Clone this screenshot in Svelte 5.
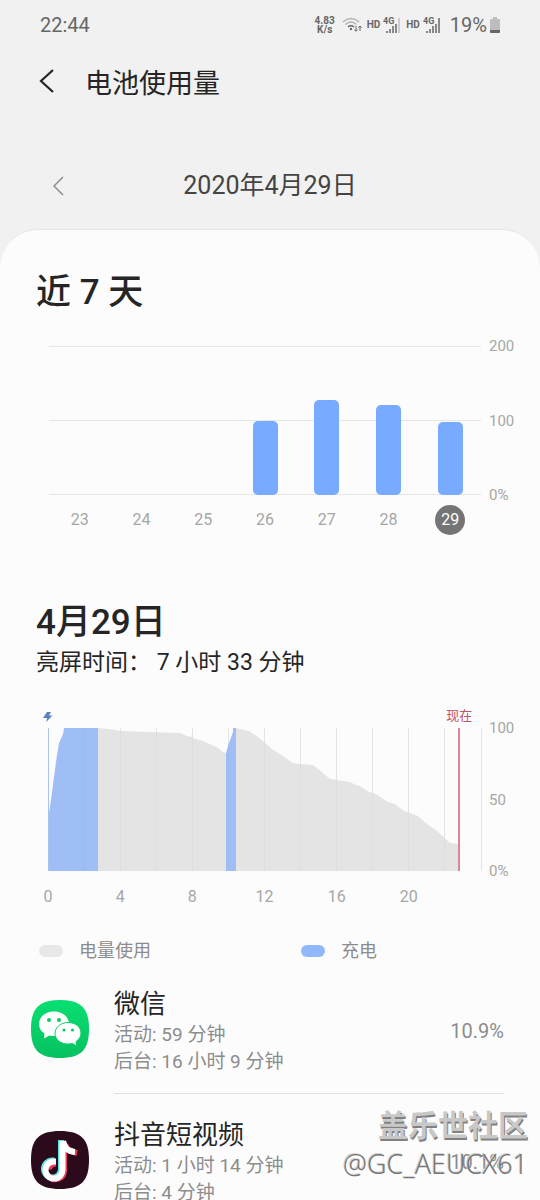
<script lang="ts">
	interface Day {
		label: string;
		value: number;
	}

	interface AppUsage {
		id: string;
		name: string;
		active: string;
		background: string;
		percent: string;
	}

	const days: Day[] = [
		{ label: '23', value: 0 },
		{ label: '24', value: 0 },
		{ label: '25', value: 0 },
		{ label: '26', value: 99 },
		{ label: '27', value: 128 },
		{ label: '28', value: 121 },
		{ label: '29', value: 98 }
	];

	const apps: AppUsage[] = [
		{ id: 'wechat', name: '微信', active: '59 分钟', background: '16 小时 9 分钟', percent: '10.9%' },
		{ id: 'douyin', name: '抖音短视频', active: '1 小时 14 分钟', background: '4 分钟', percent: '10.1%' }
	];

	const hours = ['0', '4', '8', '12', '16', '20'];
	// one line every two hours
	const gridX = Array.from({ length: 13 }, (_, i) => (i * 433) / 12);

	let selected = $state('29');
</script>

{#snippet signal(weak: boolean)}
	<svg class="signal" viewBox="0 0 18 18" aria-hidden="true">
		<text x="0" y="8">4G</text>
		<path d="M4 17v-2M7 17v-4M10 17v-7M13 17v-9" />
		<path d="M16 17V2" opacity={weak ? 0.35 : 1} />
	</svg>
{/snippet}

<div class="screen">
	<div class="status-bar">
		<span class="clock">22:44</span>
		<div class="status-icons">
			<span class="speed">4.83<br />K/s</span>
			<svg class="wifi" viewBox="0 0 20 16" aria-hidden="true">
				<path d="M1 5q8-7 16 0M3.500 7.500q5.500-5 11 0" opacity="0.45" />
				<path d="M6 10q3-2.500 6 0" />
				<circle cx="9" cy="12" r="1.200" />
				<path class="arrow" d="M14 9v5M12.300 12.500 14 14.300l1.700-1.800M18 14V9M16.300 10.700 18 9l1.700 1.700" />
			</svg>
			<span class="hd">HD</span>
			{@render signal(true)}
			<span class="hd">HD</span>
			{@render signal(false)}
			<span class="level">19%</span>
			<svg class="battery" viewBox="0 0 10 16" aria-hidden="true">
				<path d="M3 0h4v2h2q1 0 1 1v10H0V3q0-1 1-1h2z" fill="#bdbdbd" />
				<path d="M0 13h10v2q0 1-1 1H1q-1 0-1-1z" fill="#666" />
			</svg>
		</div>
	</div>

	<header>
		<button type="button" class="back" aria-label="返回">
			<svg viewBox="0 0 16 24"><path d="M14 1 2 12l12 11" /></svg>
		</button>
		<h1>电池使用量</h1>
	</header>

	<nav class="date-nav">
		<button type="button" class="prev" aria-label="前一天">
			<svg viewBox="0 0 12 20"><path d="M10 1 1 10l9 9" /></svg>
		</button>
		<span>2020年4月29日</span>
	</nav>

	<main>
		<h2>近 7 天</h2>

		<section class="week">
			<div class="week-plot">
				<div class="lines"><i></i><i></i><i></i></div>
				<div class="bars">
					{#each days as day (day.label)}
						<div class="slot">
							{#if day.value}
								<div class="bar" style="height: {day.value / 2}%"></div>
							{/if}
						</div>
					{/each}
				</div>
			</div>
			<div class="scale">
				<span>200</span><span>100</span><span>0%</span>
			</div>
			<div class="day-labels">
				{#each days as day (day.label)}
					<button type="button" onclick={() => (selected = day.label)}>
						<span class:selected={selected === day.label}>{day.label}</span>
					</button>
				{/each}
			</div>
		</section>

		<h2 class="day-title">4月29日</h2>
		<p class="screen-time">亮屏时间： 7 小时 33 分钟</p>

		<section class="day">
			<div class="day-plot">
				<svg class="bolt" viewBox="0 0 10 10" aria-hidden="true">
					<path d="M4 0h4L6 3.500h3.500L3 10l1.200-4H0z" />
				</svg>
				<span class="now">现在</span>
				<svg class="area" viewBox="0 0 433 143" preserveAspectRatio="none" aria-hidden="true">
					{#each gridX as x}
						<path class="grid" d="M{x} 0V143" />
					{/each}
					<path
						class="drain"
						d="M50 143V0L62 1 72 3 132 5 139 8 144 9 147 11 155 13 164 17 170 20 175 24 178 25V143zM188 143V0L192 1 201 3 210 9 216 14 224 21 232 26 245 35 252 36 265 37 269 40 282 51 289 52 302 54 308 57 312 58 321 64 326 65 340 74 347 76 356 83 362 85 370 88 379 96 389 103 402 115 411 116V143z"
					/>
					<path class="charge" d="M0 143V91L3 72 6 49 9 27 11 15 15 6 16 0H50V143zM178 143V25L181 15 185 4V0H188V143z" />
					<path class="start" d="M0 0V143" />
					<path class="current" d="M411 0V143" />
				</svg>
				<div class="hours">
					{#each hours as hour}
						<span>{hour}</span>
					{/each}
				</div>
			</div>
			<div class="scale">
				<span>100</span><span>50</span><span>0%</span>
			</div>
		</section>

		<div class="legend">
			<span><i class="chip"></i>电量使用</span>
			<span><i class="chip blue"></i>充电</span>
		</div>

		<ul>
			{#each apps as app (app.id)}
				<li>
					<svg class="app-icon" viewBox="0 0 60 60" aria-hidden="true">
						{#if app.id === 'wechat'}
							<defs>
								<linearGradient id="green" x2="0" y2="1">
									<stop stop-color="#08df72" />
									<stop offset="1" stop-color="#07c160" />
								</linearGradient>
							</defs>
							<path fill="url(#green)" d="M30 1C51 1 59 9 59 30S51 59 30 59 1 51 1 30 9 1 30 1z" />
							<path
								fill="#fff"
								d="M24 12.500c-8.500 0-15 5.600-15 12.500 0 4 2 7.300 5.500 9.600L14 39.500l5.500-3c1.600.4 3 .6 4.500.6 8.500 0 15-5.300 15-12.100s-6.500-12.500-15-12.500z"
							/>
							<path
								fill="#fff"
								stroke="#07cd68"
								d="M38 23.500c-7.400 0-13 4.900-13 11s5.600 10.500 13 10.500c1.500 0 2.900-.2 4.200-.6l4.800 2.600-1-4.400c3-2 5-5 5-8.600 0-6.100-5.600-10.500-13-10.500z"
							/>
							<g fill="#07cd68">
								<circle cx="19" cy="21" r="2" />
								<circle cx="29" cy="21" r="2" />
								<circle cx="34" cy="31" r="1.600" />
								<circle cx="42.500" cy="31" r="1.600" />
							</g>
						{:else}
							<path fill="#2b0a1c" d="M30 1C51 1 59 9 59 30S51 59 30 59 1 51 1 30 9 1 30 1z" />
							<g fill="none" stroke-width="6">
								<path stroke="#59e4e0" d="M31 10v29a8.500 8.500 0 1 1-8.500-8.500h2M31 11c1 6 5 10 12 10" />
								<path stroke="#ee3a5b" d="M34 12v29a8.500 8.500 0 0 1-15 5M26 33.500q-7 0-7 6M35 14c1 5 5 8 12 9" />
								<path stroke="#fff" d="M32.500 11v29a8.500 8.500 0 1 1-8.500-8.500h2M33 11c1 6 5 10.500 12 11" />
							</g>
						{/if}
					</svg>
					<div class="details">
						<div class="info">
							<h3>{app.name}</h3>
							<p>活动: {app.active}</p>
							<p>后台: {app.background}</p>
						</div>
						<span class="percent">{app.percent}</span>
					</div>
				</li>
			{/each}
		</ul>
	</main>

	<div class="watermark">
		<strong>盖乐世社区</strong>
		<span>@GC_AEUCX61</span>
	</div>
</div>

<style>
	:global(body) {
		background: #f1f1f1;
	}

	.screen {
		position: relative;
		height: 100vh;
		overflow: hidden;
		font-family: Roboto, 'Noto Sans CJK SC', sans-serif;
		color: #252525;
	}

	h1,
	h2,
	h3,
	p,
	ul {
		margin: 0;
		padding: 0;
	}

	button {
		padding: 0;
		border: 0;
		background: none;
		font: inherit;
		color: inherit;
		cursor: pointer;
	}

	svg {
		display: block;
		flex: none;
	}

	.status-bar {
		display: flex;
		justify-content: space-between;
		align-items: center;
		height: 49px;
		padding: 0 40px;
		font-size: 20px;
		color: #666;
	}

	.status-icons {
		display: flex;
		align-items: center;
		gap: 5px;
	}

	.speed {
		font-size: 10px;
		font-weight: 700;
		line-height: 9px;
		text-align: center;
	}

	.wifi {
		width: 20px;
		height: 16px;
		margin-left: 2px;
		fill: none;
		stroke: #666;
		stroke-width: 1.5;
	}

	.wifi circle {
		fill: #666;
		stroke: none;
	}

	.wifi .arrow {
		stroke-width: 1;
	}

	.hd {
		font-size: 10px;
		font-weight: 700;
	}

	.signal {
		width: 18px;
		height: 18px;
		margin-left: -2px;
		stroke: #666;
		stroke-width: 1.5;
	}

	.signal text {
		fill: #666;
		stroke: none;
		font-size: 9px;
		font-weight: 700;
	}

	.level {
		margin-left: 4px;
	}

	.battery {
		width: 10px;
		height: 16px;
		margin-left: -2px;
	}

	header {
		display: flex;
		align-items: center;
		gap: 30px;
		height: 64px;
		padding: 0 39px;
	}

	.back svg {
		width: 16px;
		height: 24px;
		fill: none;
		stroke: #252525;
		stroke-width: 2.2;
	}

	h1 {
		font-size: 27px;
		font-weight: 400;
	}

	.date-nav {
		display: grid;
		grid-template-columns: 1fr auto 1fr;
		align-items: center;
		height: 87px;
		padding: 29px 53px 0;
		font-size: 25px;
		line-height: 30px;
		color: #444;
	}

	.prev {
		justify-self: start;
	}

	.prev svg {
		width: 12px;
		height: 20px;
		fill: none;
		stroke: #8c8c8c;
		stroke-width: 1.5;
	}

	main {
		padding: 42px 25px 0 36px;
		border-top: 1px solid #e4e4e4;
		border-radius: 38px 38px 0 0;
		background: #fcfcfc;
	}

	h2 {
		font-size: 35px;
		font-weight: 500;
		line-height: 42px;
	}

	.week {
		display: grid;
		grid-template-columns: 1fr 26px;
		column-gap: 8px;
		margin: 32px 0 0 13px;
	}

	.week-plot {
		position: relative;
		height: 149px;
	}

	.lines {
		position: absolute;
		inset: 0;
		display: flex;
		flex-direction: column;
		justify-content: space-between;
	}

	.lines i {
		height: 1px;
		background: #e6e6e6;
	}

	.bars {
		position: relative;
		display: flex;
		height: 100%;
	}

	.slot {
		flex: 1;
		display: flex;
		align-items: flex-end;
		justify-content: center;
	}

	.bar {
		width: 25px;
		border-radius: 5px;
		background: #78aaff;
	}

	.scale {
		display: flex;
		flex-direction: column;
		justify-content: space-between;
		margin: -9px 0;
		font-size: 15px;
		line-height: 18px;
		color: #a6a6a6;
	}

	.day-labels {
		display: flex;
		margin-top: 10px;
	}

	.day-labels button {
		display: flex;
		flex: 1;
		justify-content: center;
	}

	.day-labels span {
		width: 30px;
		font-size: 16px;
		line-height: 30px;
		color: #a6a6a6;
	}

	.day-labels .selected {
		border-radius: 50%;
		background: #757575;
		color: #fff;
	}

	.day-title {
		margin-top: 67px;
	}

	.screen-time {
		font-size: 23px;
		line-height: 38px;
	}

	.day {
		display: grid;
		grid-template-columns: 1fr 26px;
		column-gap: 8px;
		margin: 46px 0 0 12px;
	}

	.day-plot {
		position: relative;
	}

	.bolt {
		position: absolute;
		top: -16px;
		left: -5px;
		width: 10px;
		height: 10px;
		fill: #5b82b8;
	}

	.now {
		position: absolute;
		top: -22px;
		left: 95%;
		transform: translateX(-50%);
		font-size: 13px;
		line-height: 20px;
		white-space: nowrap;
		color: #c05468;
	}

	.area {
		width: 100%;
		height: 143px;
		overflow: visible;
	}

	.area path {
		vector-effect: non-scaling-stroke;
	}

	.drain {
		fill: #dcdcdc;
		fill-opacity: 0.75;
	}

	.charge {
		fill: #7fa9f3;
		fill-opacity: 0.75;
	}

	.grid {
		stroke: #e4e4e4;
		shape-rendering: crispEdges;
	}

	.start {
		stroke: #a9c3ea;
		shape-rendering: crispEdges;
	}

	.current {
		stroke: #d98996;
		stroke-width: 2;
		shape-rendering: crispEdges;
	}

	.hours {
		display: flex;
		margin-top: 16px;
		font-size: 16px;
		line-height: 20px;
		color: #a6a6a6;
	}

	.hours span {
		flex: 1;
		text-align: center;
		transform: translateX(-50%);
	}

	.day .scale {
		height: 161px;
		margin-bottom: 0;
	}

	.legend {
		display: grid;
		grid-template-columns: 262px 1fr;
		margin: 32px 0 0 3px;
		font-size: 18px;
		line-height: 24px;
		color: #8c8c8c;
	}

	.legend span {
		display: flex;
		align-items: center;
		gap: 16px;
	}

	.chip {
		width: 24px;
		height: 12px;
		border-radius: 6px;
		background: #e8e8e8;
	}

	.chip.blue {
		background: #91b8fd;
	}

	ul {
		margin: 0 11px 0 -6px;
		list-style: none;
	}

	li {
		display: flex;
		align-items: center;
	}

	.app-icon {
		width: 60px;
		height: 60px;
	}

	.details {
		display: flex;
		flex: 1;
		align-items: center;
		margin-left: 24px;
		padding: 24px 0 18px;
		border-bottom: 1px solid #e0e0e0;
	}

	.info {
		flex: 1;
	}

	h3 {
		font-size: 26px;
		font-weight: 400;
		line-height: 34px;
	}

	.info p {
		font-size: 19px;
		line-height: 27px;
		color: #8c8c8c;
	}

	.percent {
		font-size: 20px;
		color: #8c8c8c;
	}

	.watermark {
		position: absolute;
		right: 12px;
		bottom: 18px;
		display: flex;
		flex-direction: column;
		align-items: flex-end;
		font-family: 'Noto Sans', 'Noto Sans CJK SC', sans-serif;
	}

	.watermark strong {
		font-size: 30px;
		line-height: 42px;
		color: #c8c8c8;
		text-shadow: 1px 2px 0 #808080;
	}

	.watermark span {
		font-size: 27px;
		font-weight: 300;
		line-height: 36px;
		color: #777;
		text-shadow: -1px -1px 0 #d4d4d4;
	}
</style>
